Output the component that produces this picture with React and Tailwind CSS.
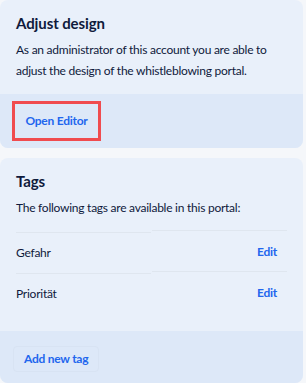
import React from "react";

const tags = ["Gefahr", "Priorität"];

export default function App() {
  return (
    <div
      className="w-[306px] h-[383px] bg-[#f5f7fa] overflow-hidden text-[#0f1a3c] tracking-[-0.25px]"
      style={{ fontFamily: 'Lato, "Noto Sans", sans-serif' }}
    >
      {/* Adjust design */}
      <div className="w-[303px] h-[148px] rounded-lg bg-[#e9f0fa] flex flex-col overflow-hidden">
        <div className="px-4 pt-[12px] h-[94px]">
          <h2 className="text-[15px] font-bold leading-[22px] tracking-[-0.1px]">Adjust design</h2>
          <p className="mt-[5px] text-[12px] leading-[21px]">
            As an administrator of this account you are able to adjust the
            design of the whistleblowing portal.
          </p>
        </div>
        <div className="flex-1 bg-[#dde8f8] px-3 pt-[7px]">
          <button className="w-[89px] h-[40px] border-[3px] border-[#f04b4f] text-[12px] font-bold text-[#2266ee] flex items-center justify-center">
            Open Editor
          </button>
        </div>
      </div>

      {/* Tags */}
      <div className="mt-[10px] w-[303px] h-[225px] rounded-lg bg-[#e9f0fa] flex flex-col overflow-hidden">
        <div className="px-4 pt-[12px] h-[173px]">
          <h2 className="text-[15px] font-bold leading-[22px] tracking-[-0.1px]">Tags</h2>
          <p className="mt-[7px] text-[12px] leading-[18px]">
            The following tags are available in this portal:
          </p>
          <div className="mt-[15px] w-[271px]">
            {tags.map((t) => (
              <div key={t} className="grid grid-cols-2 gap-x-px h-[41px]">
                <div className="border-t border-[#dfe6ef] flex items-center text-[12px]">
                  {t}
                </div>
                <div className="border-t border-[#dfe6ef] flex items-center justify-end pr-[10px] text-[12px] font-bold text-[#2266ee] -mt-[2px]">
                  Edit
                </div>
              </div>
            ))}
          </div>
        </div>
        <div className="flex-1 bg-[#dde8f8] px-[13px] pt-[14px]">
          <button className="h-[26px] px-[10px] border border-[#d8e3f3] rounded-sm text-[12px] font-bold text-[#2266ee]">
            Add new tag
          </button>
        </div>
      </div>
    </div>
  );
}
